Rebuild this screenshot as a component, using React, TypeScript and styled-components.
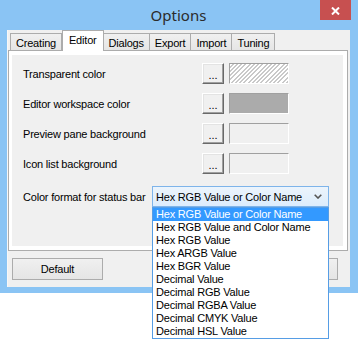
import React from 'react';
import styled, { createGlobalStyle } from 'styled-components';

const GlobalStyle = createGlobalStyle`
  html {
    height: 100%;
  }
  html, body {
    margin: 0;
    padding: 0;
    background: #ffffff;
  }
  body {
    min-height: 100%;
    font-family: "Liberation Sans", Arial, sans-serif;
    font-size: 11px;
    letter-spacing: -0.2px;
    color: #000;
  }
  #root {
    min-height: 339px;
  }
`;

const Window = styled.div`
  width: 358px;
  box-sizing: border-box;
  background: #8ac4f4;
  padding: 0 8px 6px 7px;
`;

const TitleBar = styled.div`
  height: 30px;
  display: grid;
  grid-template-columns: 1fr auto 1fr;
  align-items: start;
`;

const Title = styled.div`
  grid-column: 2;
  line-height: 30px;
  font-family: "Noto Sans", "Open Sans", sans-serif;
  font-size: 15px;
  letter-spacing: 0;
  color: #2b2b2b;
`;

const CloseButton = styled.div`
  justify-self: end;
  margin-right: -1px;
  width: 31px;
  height: 20px;
  background: #c75050;
  display: flex;
  align-items: center;
  justify-content: center;
  padding-top: 2px;
  box-sizing: border-box;
`;

const Client = styled.div`
  background: #f0f0f0;
  height: 257px;
  box-sizing: border-box;
  padding: 1px 2px 0 1px;
  border-left: 1px solid #f7f7f7;
`;

const TabStrip = styled.div`
  display: flex;
  align-items: flex-end;
  height: 20px;
  padding-left: 1px;
  position: relative;
  z-index: 1;
  margin-bottom: -1px;
`;

const Tab = styled.div<{ active?: boolean }>`
  box-sizing: border-box;
  height: ${(p) => (p.active ? '21px' : '18px')};
  padding: ${(p) => (p.active ? '2px 6px 0' : '2px 5px 0')};
  border: 1px solid #acacac;
  border-bottom: ${(p) => (p.active ? 'none' : '1px solid #acacac')};
  border-left: ${(p) => (p.active ? '1px solid #acacac' : 'none')};
  background: ${(p) => (p.active ? '#ffffff' : 'linear-gradient(#f0f0f0, #e5e5e5)')};
  line-height: 14px;
  white-space: nowrap;
  &:first-child {
    border-left: 1px solid #acacac;
  }
`;

const Panel = styled.div`
  box-sizing: border-box;
  height: 201px;
  border: 1px solid #acacac;
  background: #ffffff;
  padding: 4px 4px 4px 3px;
  margin-left: -1px;
`;

const Page = styled.div`
  height: 100%;
  background: #f0f0f0;
  display: flex;
  flex-direction: column;
  gap: 9px;
  padding: 8px 0 0 11px;
  box-sizing: border-box;
`;

const Row = styled.div<{ gapAbove?: number }>`
  display: flex;
  align-items: center;
  height: 21px;
  margin-top: ${(p) => p.gapAbove ?? 0}px;
`;

const Label = styled.div<{ width?: number }>`
  width: ${(p) => p.width ?? 179}px;
  flex-shrink: 0;
  white-space: nowrap;
`;

const DotsButton = styled.div`
  box-sizing: border-box;
  width: 22px;
  height: 21px;
  background: #f0f0f0;
  border-top: 1px solid #ffffff;
  border-left: 1px solid #ffffff;
  border-right: 1px solid #696969;
  border-bottom: 1px solid #696969;
  box-shadow: inset -1px -1px 0 #a0a0a0, inset 1px 1px 0 #e3e3e3;
  text-align: center;
  line-height: 23px;
  letter-spacing: 0;
`;

const Swatch = styled.div<{ fill: string }>`
  box-sizing: border-box;
  width: 60px;
  height: 21px;
  margin-left: 5px;
  border-top: 1px solid #a0a0a0;
  border-left: 1px solid #a0a0a0;
  border-right: 1px solid #ffffff;
  border-bottom: 1px solid #ffffff;
  background: ${(p) => p.fill};
`;

const ComboWrap = styled.div`
  position: relative;
  width: 177px;
  height: 21px;
`;

const Combo = styled.div`
  box-sizing: border-box;
  height: 21px;
  border: 1px solid #7eb4ea;
  background: linear-gradient(#ecf4fc, #dcecfc);
  display: flex;
  align-items: center;
  justify-content: space-between;
  padding: 0 6px 0 3px;
  white-space: nowrap;
`;

const DropList = styled.div`
  position: absolute;
  top: 100%;
  left: 0;
  width: 177px;
  box-sizing: border-box;
  border: 1px solid #569de5;
  background: #ffffff;
  z-index: 5;
`;

const Option = styled.div<{ selected?: boolean }>`
  height: 13px;
  line-height: 13px;
  padding-left: 3px;
  white-space: nowrap;
  background: ${(p) => (p.selected ? '#3399ff' : 'transparent')};
  color: ${(p) => (p.selected ? '#ffffff' : '#000000')};
`;

const Footer = styled.div`
  display: flex;
  justify-content: space-between;
  padding: 7px 10px 0 3px;
`;

const Button = styled.div<{ width?: number }>`
  box-sizing: border-box;
  width: ${(p) => p.width ?? 91}px;
  height: 22px;
  border: 1px solid #acacac;
  background: linear-gradient(#f0f0f0, #e5e5e5);
  display: flex;
  align-items: center;
  justify-content: center;
`;

const hatch =
  'repeating-linear-gradient(135deg, #ffffff 0px, #ffffff 1.5px, #c9c9c9 1.5px, #c9c9c9 3px)';

const colorRows = [
  { label: 'Transparent color', fill: hatch },
  { label: 'Editor workspace color', fill: '#ababab' },
  { label: 'Preview pane background', fill: '#f0f0f0' },
  { label: 'Icon list background', fill: '#f0f0f0' },
];

const formats = [
  'Hex RGB Value or Color Name',
  'Hex RGB Value and Color Name',
  'Hex RGB Value',
  'Hex ARGB Value',
  'Hex BGR Value',
  'Decimal Value',
  'Decimal RGB Value',
  'Decimal RGBA Value',
  'Decimal CMYK Value',
  'Decimal HSL Value',
];

const tabs = ['Creating', 'Editor', 'Dialogs', 'Export', 'Import', 'Tuning'];

const App = () => {
  return (
    <>
      <GlobalStyle />
      <Window>
        <TitleBar>
          <Title>Options</Title>
          <CloseButton>
            <svg width="9" height="8" viewBox="0 0 9 8">
              <path d="M1 0.5 L8 7.5 M8 0.5 L1 7.5" stroke="#fff" strokeWidth="2" />
            </svg>
          </CloseButton>
        </TitleBar>
        <Client>
          <TabStrip>
            {tabs.map((t) => (
              <Tab key={t} active={t === 'Editor'}>
                {t}
              </Tab>
            ))}
          </TabStrip>
          <Panel>
            <Page>
              {colorRows.map((r) => (
                <Row key={r.label}>
                  <Label>{r.label}</Label>
                  <DotsButton>...</DotsButton>
                  <Swatch fill={r.fill} />
                </Row>
              ))}
              <Row gapAbove={3}>
                <Label width={129}>Color format for status bar</Label>
                <ComboWrap>
                  <Combo>
                    <span>{formats[0]}</span>
                    <svg width="8" height="5" viewBox="0 0 8 5">
                      <path d="M0.7 0.7 L4 4 L7.3 0.7" stroke="#555" strokeWidth="1.6" fill="none" />
                    </svg>
                  </Combo>
                  <DropList>
                    {formats.map((f, i) => (
                      <Option key={f} selected={i === 0}>
                        {f}
                      </Option>
                    ))}
                  </DropList>
                </ComboWrap>
              </Row>
            </Page>
          </Panel>
          <Footer>
            <Button>Default</Button>
            {/* sits under the open drop-down list, only its right edge shows */}
            <Button width={156} />
          </Footer>
        </Client>
      </Window>
    </>
  );
};

export default App;
